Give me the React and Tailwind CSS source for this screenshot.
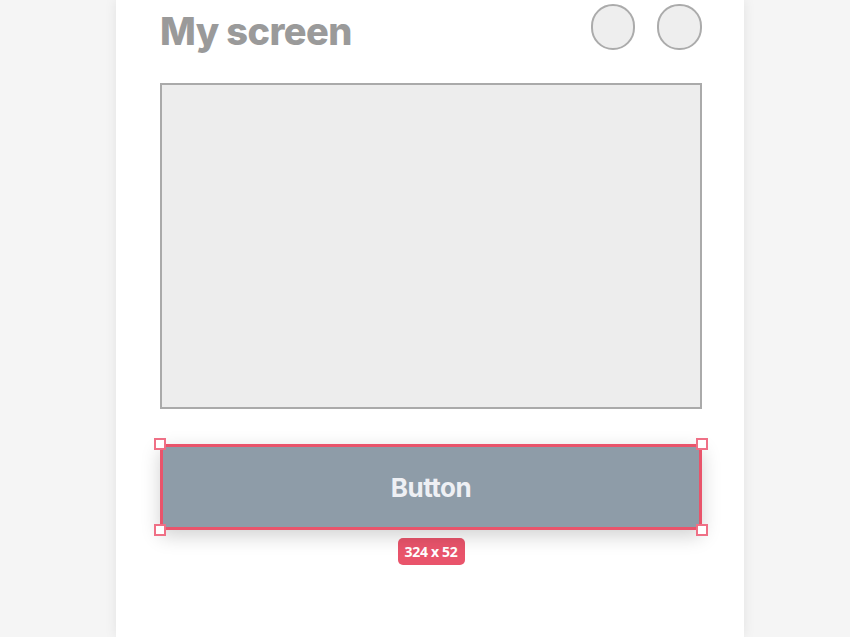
export default function App() {
  const handles = [
    'left-[-9px] top-[-9px]',
    'right-[-9px] top-[-9px]',
    'left-[-9px] bottom-[-9px]',
    'right-[-9px] bottom-[-9px]',
  ];

  return (
    <div className="w-[850px] h-[637px] bg-[#f5f5f5] flex overflow-hidden" style={{ fontFamily: 'Inter, "Open Sans", sans-serif' }}>
      <div className="w-[628px] h-full ml-[116px] bg-white shadow-[0_0_12px_rgba(0,0,0,0.08)] pl-[44px] pr-[42px] pt-[4px]">
        <div className="flex items-center justify-between h-[46px]">
          <h1 className="text-[38px] font-extrabold tracking-[-0.6px] text-[#9a9a9a] leading-none mt-[8px]">My screen</h1>
          <div className="flex gap-[22px]">
            <div className="w-[44px] h-[46px] rounded-[22px] bg-[#eeeeee] border-2 border-[#ababab]" />
            <div className="w-[45px] h-[46px] rounded-[22px] bg-[#eeeeee] border-2 border-[#ababab]" />
          </div>
        </div>

        <div className="mt-[33px] h-[326px] bg-[#ededed] border-2 border-[#aaaaaa]" />

        <div className="relative mt-[35px] flex flex-col items-center">
          <div className="relative w-full h-[86px] bg-[#8e9ca8] border-[3px] border-[#e9546b] shadow-[0_6px_18px_rgba(0,0,0,0.18)] flex items-center justify-center">
            <span className="text-[26px] font-bold text-[#eef0f4] tracking-[-0.5px]">Button</span>
            {handles.map((h) => (
              <div key={h} className={`absolute ${h} w-[12px] h-[12px] bg-white border-2 border-[#ef7086]`} />
            ))}
          </div>
          <div
            className="mt-[8px] px-[7px] h-[27px] rounded-[5px] bg-[#e9546b] text-white text-[14px] font-bold flex items-center tracking-[-0.3px]"
            style={{ fontFamily: '"Open Sans", sans-serif' }}
          >
            324 x 52
          </div>
        </div>
      </div>
    </div>
  );
}
